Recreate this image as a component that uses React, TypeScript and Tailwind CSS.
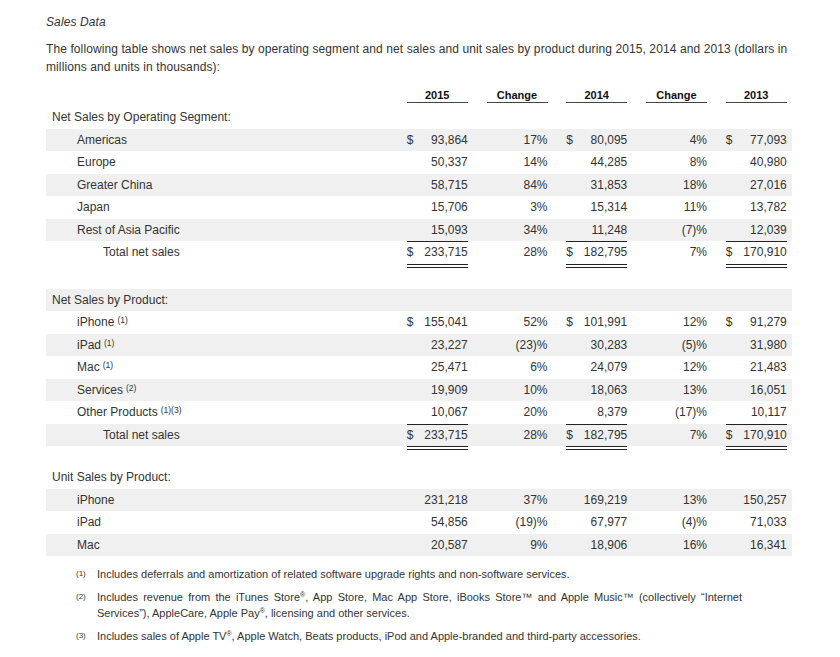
type Row = {
  label: string;
  note?: string;
  kind?: "item" | "total";
  shaded?: boolean;
  v: [string, string, string, string, string];
  dollar?: boolean;
  lineAbove?: boolean;
  doubleBelow?: boolean;
};

const segments: Row[] = [
  { label: "Americas", shaded: true, dollar: true, v: ["93,864", "17%", "80,095", "4%", "77,093"] },
  { label: "Europe", v: ["50,337", "14%", "44,285", "8%", "40,980"] },
  { label: "Greater China", shaded: true, v: ["58,715", "84%", "31,853", "18%", "27,016"] },
  { label: "Japan", v: ["15,706", "3%", "15,314", "11%", "13,782"] },
  { label: "Rest of Asia Pacific", shaded: true, v: ["15,093", "34%", "11,248", "(7)%", "12,039"] },
  { label: "Total net sales", kind: "total", dollar: true, lineAbove: true, doubleBelow: true, v: ["233,715", "28%", "182,795", "7%", "170,910"] },
];

const products: Row[] = [
  { label: "iPhone", note: "(1)", dollar: true, v: ["155,041", "52%", "101,991", "12%", "91,279"] },
  { label: "iPad", note: "(1)", shaded: true, v: ["23,227", "(23)%", "30,283", "(5)%", "31,980"] },
  { label: "Mac", note: "(1)", v: ["25,471", "6%", "24,079", "12%", "21,483"] },
  { label: "Services", note: "(2)", shaded: true, v: ["19,909", "10%", "18,063", "13%", "16,051"] },
  { label: "Other Products", note: "(1)(3)", v: ["10,067", "20%", "8,379", "(17)%", "10,117"] },
  { label: "Total net sales", kind: "total", shaded: true, dollar: true, lineAbove: true, doubleBelow: true, v: ["233,715", "28%", "182,795", "7%", "170,910"] },
];

const units: Row[] = [
  { label: "iPhone", shaded: true, v: ["231,218", "37%", "169,219", "13%", "150,257"] },
  { label: "iPad", v: ["54,856", "(19)%", "67,977", "(4)%", "71,033"] },
  { label: "Mac", shaded: true, v: ["20,587", "9%", "18,906", "16%", "16,341"] },
];

const grid = "grid grid-cols-[342px_61px_61px_61px_61px_61px] gap-x-[18.75px] pr-[6px]";

function Money({ value, dollar, lineAbove, doubleBelow }: { value: string; dollar?: boolean; lineAbove?: boolean; doubleBelow?: boolean }) {
  return (
    <div className="relative flex h-full items-center justify-between">
      {lineAbove && <div className="absolute left-0 right-0 top-0 h-px bg-[#222]" />}
      <span>{dollar ? "$" : ""}</span>
      <span>{value}</span>
      {doubleBelow && (
        <>
          <div className="absolute left-0 right-0 bottom-[-1px] h-px bg-[#222]" />
          <div className="absolute left-0 right-0 bottom-[-4px] h-px bg-[#222]" />
        </>
      )}
    </div>
  );
}

function DataRow({ row }: { row: Row }) {
  const indent = row.kind === "total" ? "pl-[57px]" : "pl-[31px]";
  return (
    <div className={`${grid} h-[22.5px] items-center ${row.shaded ? "bg-[#f0f0f0]" : ""}`}>
      <div className={indent}>
        {row.label}
        {row.note && <span className="relative top-[-3px] ml-[3px] text-[8.5px] leading-none">{row.note}</span>}
      </div>
      <Money value={row.v[0]} dollar={row.dollar} lineAbove={row.lineAbove} doubleBelow={row.doubleBelow} />
      <div className="text-right">{row.v[1]}</div>
      <Money value={row.v[2]} dollar={row.dollar} lineAbove={row.lineAbove} doubleBelow={row.doubleBelow} />
      <div className="text-right">{row.v[3]}</div>
      <Money value={row.v[4]} dollar={row.dollar} lineAbove={row.lineAbove} doubleBelow={row.doubleBelow} />
    </div>
  );
}

function SectionHead({ title, shaded }: { title: string; shaded?: boolean }) {
  return (
    <div className={`flex h-[22.5px] items-center pl-[6px] ${shaded ? "bg-[#f0f0f0]" : ""}`}>{title}</div>
  );
}

function Reg() {
  return <span className="relative top-[-4px] text-[7px] leading-none">®</span>;
}

export default function App() {
  return (
    <div className="min-h-screen bg-white pl-[46px] pr-[40px] pt-[14px] font-['Liberation_Sans',Arial,sans-serif] text-[12px] text-[#333]">
      <h2 className="italic leading-[16px] tracking-[0.1px]">Sales Data</h2>
      <p className="mt-[10px] w-[752px] leading-[18px] tracking-[0.1px]">
        The following table shows net sales by operating segment and net sales and unit sales by product during 2015, 2014 and 2013 (dollars in
        millions and units in thousands):
      </p>

      <div className="mt-[13px] w-[746px]">
        <div className={`${grid} h-[17px] items-start text-[11px] font-bold text-[#111]`}>
          <div />
          {["2015", "Change", "2014", "Change", "2013"].map((h, i) => (
            <div key={i} className="h-[14px] border-b border-[#444] text-center leading-[12px]">
              {h}
            </div>
          ))}
        </div>

        <SectionHead title="Net Sales by Operating Segment:" />
        {segments.map((r, i) => (
          <DataRow key={i} row={r} />
        ))}

        <div className="h-[25px]" />
        <SectionHead title="Net Sales by Product:" shaded />
        {products.map((r, i) => (
          <DataRow key={i} row={r} />
        ))}

        <div className="h-[20px]" />
        <SectionHead title="Unit Sales by Product:" />
        {units.map((r, i) => (
          <DataRow key={i} row={r} />
        ))}
      </div>

      <div className="mt-[10px] flex flex-col gap-[7px] text-[11px] leading-[16px]">
        <div className="flex">
          <span className="w-[51px] shrink-0 pl-[30px] text-[8px]">(1)</span>
          <span>Includes deferrals and amortization of related software upgrade rights and non-software services.</span>
        </div>
        <div className="flex">
          <span className="w-[51px] shrink-0 pl-[30px] text-[8px]">(2)</span>
          <span className="w-[645px] text-justify">
            Includes revenue from the iTunes Store<Reg />, App Store, Mac App Store, iBooks Store™ and Apple Music™ (collectively “Internet
            Services”), AppleCare, Apple Pay<Reg />, licensing and other services.
          </span>
        </div>
        <div className="flex">
          <span className="w-[51px] shrink-0 pl-[30px] text-[8px]">(3)</span>
          <span>
            Includes sales of Apple TV<Reg />, Apple Watch, Beats products, iPod and Apple-branded and third-party accessories.
          </span>
        </div>
      </div>
    </div>
  );
}
